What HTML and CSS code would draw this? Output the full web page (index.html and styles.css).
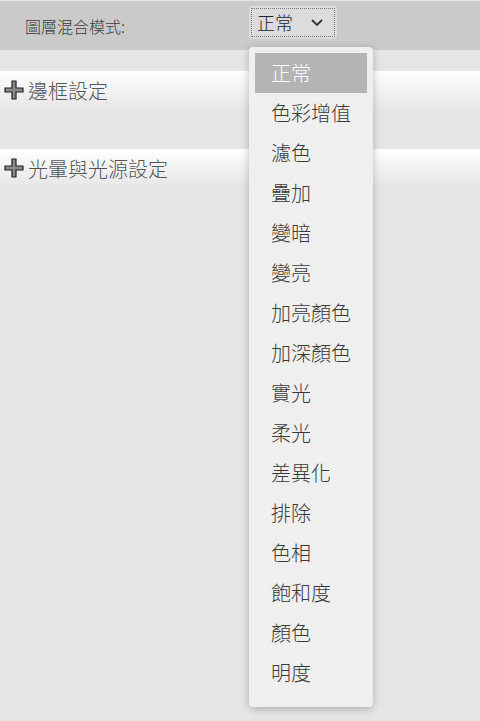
FILE: index.html
```html
<!DOCTYPE html>
<html lang="zh-Hant">

<head>
    <meta charset="utf-8">
    <meta name="viewport" content="width=device-width, initial-scale=1.0">
    <title>圖層混合模式</title>
    <link rel="stylesheet" href="styles.css">
</head>

<body>
    <div class="topbar">
        <span class="label">圖層混合模式:</span>
        <div class="select">
            <span class="select_value">正常</span>
            <svg class="chev" width="14" height="9" viewBox="0 0 14 9">
                <path d="M2 2 L7 7 L12 2" fill="none" stroke="#333" stroke-width="1.8"/>
            </svg>
        </div>
    </div>

    <div class="section">
        <svg class="plus" width="20" height="20" viewBox="0 0 20 20">
            <path d="M8 1 H12 V8 H19 V12 H12 V19 H8 V12 H1 V8 H8 Z" fill="#8a8a8a" stroke="#222" stroke-width="1.2"/>
        </svg>
        <span>邊框設定</span>
    </div>

    <div class="section second">
        <svg class="plus" width="20" height="20" viewBox="0 0 20 20">
            <path d="M8 1 H12 V8 H19 V12 H12 V19 H8 V12 H1 V8 H8 Z" fill="#8a8a8a" stroke="#222" stroke-width="1.2"/>
        </svg>
        <span>光暈與光源設定</span>
    </div>

    <ul class="menu">
        <li class="active">正常</li>
        <li>色彩增值</li>
        <li>濾色</li>
        <li>疊加</li>
        <li>變暗</li>
        <li>變亮</li>
        <li>加亮顏色</li>
        <li>加深顏色</li>
        <li>實光</li>
        <li>柔光</li>
        <li>差異化</li>
        <li>排除</li>
        <li>色相</li>
        <li>飽和度</li>
        <li>顏色</li>
        <li>明度</li>
    </ul>
</body>

</html>
```

FILE: styles.css
```css
body {
    margin: 0;
    background-color: #e6e6e6;
    font-family: "Noto Sans CJK TC", "Noto Sans", sans-serif;
    font-weight: 300;
    color: #333;
    height: 721px;
    overflow: hidden;
}

/* --------- TOP BAR --------------- */
.topbar {
    display: flex;
    align-items: center;
    height: 49px;
    margin-top: 1px;
    background-color: #cacaca;
    box-sizing: border-box;
    padding-left: 25px;
}

.label {
    font-size: 16px;
    color: #3a3a3a;
    width: 224px;
}

.select {
    display: flex;
    align-items: center;
    width: 88px;
    height: 33px;
    margin-top: -7px;
    box-sizing: border-box;
    background-color: #dcdcdc;
    border-radius: 3px;
    outline: 1px dotted #777;
    outline-offset: -3px;
    padding-left: 8px;
}

.select_value {
    font-size: 18px;
    color: #222;
    width: 53px;
}

/* --------- SECTIONS --------------- */
.section {
    display: flex;
    align-items: center;
    height: 38px;
    margin-top: 21px;
    padding-left: 4px;
    background: linear-gradient(#ffffff, #e6e6e6);
    font-size: 20px;
    color: #555;
}

.section.second {
    margin-top: 40px;
}

.plus {
    margin-right: 4px;
}

/* --------- MENU --------------- */
.menu {
    position: absolute;
    top: 47px;
    left: 249px;
    width: 124px;
    margin: 0;
    padding: 6px 6px 14px;
    box-sizing: border-box;
    list-style: none;
    background-color: #efefef;
    border-radius: 4px;
    box-shadow: 0 2px 8px rgba(0, 0, 0, 0.25);
}

.menu li {
    height: 40px;
    line-height: 40px;
    padding-left: 16px;
    font-size: 20px;
    color: #3a3a3a;
}

.menu li.active {
    background-color: #b4b4b4;
    color: white;
}
```
